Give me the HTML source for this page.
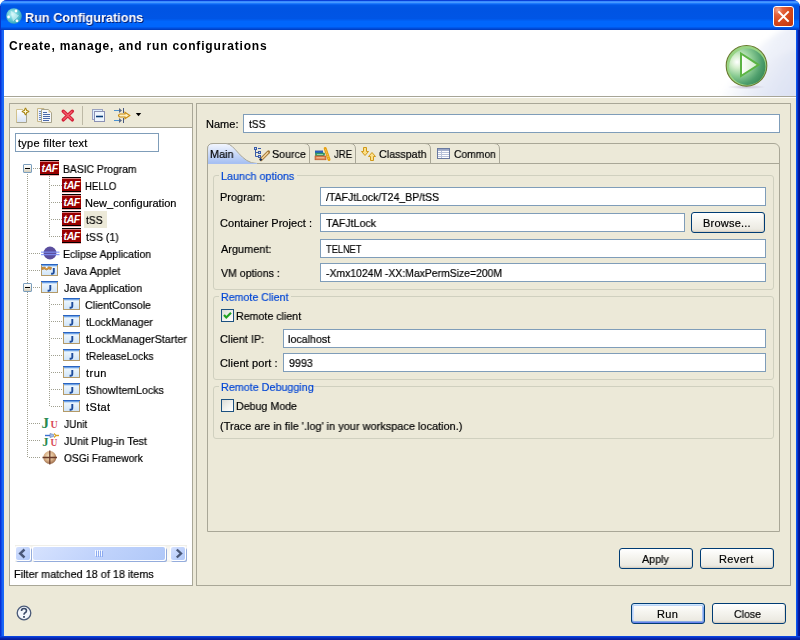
<!DOCTYPE html>
<html><head><meta charset="utf-8"><style>
html,body{margin:0;padding:0;}
body{width:800px;height:640px;position:relative;overflow:hidden;background:#FFFFFF;font-family:"Liberation Sans", sans-serif;font-size:11px;color:#000;}
svg{overflow:visible;}
</style></head><body>
<div style="position:absolute;left:0;top:0;width:800px;height:640px;background:#0A3BD4;border-radius:7px 7px 0 0;"></div>
<div style="position:absolute;left:0;top:0;width:800px;height:30px;border-radius:7px 7px 0 0;background:linear-gradient(to bottom,#0A40D8 0.5px,#3A8CFF 1.5px,#4898FF 2.5px,#1C7AFC 3.5px,#0A62F0 4.5px,#0058E6 5.5px,#0054E3 8.5px,#0055E5 18.5px,#0060F4 20.5px,#0066FC 21.5px,#0066FC 26.5px,#0052E4 28px,#0040C4 29.5px);"></div>
<div style="position:absolute;left:0;top:6px;width:1px;height:24px;background:#0A34C8;"></div>
<div style="position:absolute;left:799px;top:6px;width:1px;height:24px;background:#0A2AA8;"></div>
<div style="position:absolute;left:0;top:30px;width:4px;height:610px;background:linear-gradient(to right,#0828D0 0px,#0838DC 1px,#1860F2 2px,#1A68F8 3px,#1A68F8 4px);"></div>
<div style="position:absolute;left:796px;top:30px;width:4px;height:610px;background:linear-gradient(to right,#0A5AF0 0px,#0850EC 1px,#0A22B0 2px,#001490 3px,#001490 4px);"></div>
<div style="position:absolute;left:0;top:636px;width:800px;height:4px;background:linear-gradient(to bottom,#0A50F0 0px,#0838D0 1px,#0A2CB8 2px,#061EA0 3px,#061EA0 4px);"></div>
<svg style="position:absolute;left:6px;top:8px" width="16" height="16" viewBox="0 0 16 16"><defs><radialGradient id="ti" cx="0.4" cy="0.4" r="0.65"><stop offset="0" stop-color="#D0F8FA"/><stop offset="0.45" stop-color="#70D0DA"/><stop offset="1" stop-color="#2CA0B8"/></radialGradient></defs><circle cx="8" cy="8" r="7.8" fill="url(#ti)"/><path d="M4.5 2.5 L13.5 8 L7 13.5 Z" fill="#E0FAFC" opacity="0.55"/><path d="M8 13 L14 7" stroke="#2A98A8" stroke-width="0.8" stroke-dasharray="1 1" opacity="0.7"/><circle cx="10" cy="3" r="1.4" fill="#fff"/><circle cx="2.6" cy="9" r="1.4" fill="#fff"/><circle cx="11" cy="12.8" r="1.4" fill="#fff"/></svg>
<div style="position:absolute;will-change:transform;left:26.02px;top:11px;line-height:15px;font-size:13px;color:#0A1E6E;font-weight:bold;white-space:nowrap;transform:scaleX(0.9750);transform-origin:0 0;">Run Configurations</div>
<div style="position:absolute;will-change:transform;left:25.02px;top:10px;line-height:15px;font-size:13px;color:#FFFFFF;font-weight:bold;white-space:nowrap;transform:scaleX(0.9750);transform-origin:0 0;">Run Configurations</div>
<div style="position:absolute;left:773px;top:6px;width:19px;height:19px;border:1px solid #fff;border-radius:3px;background:radial-gradient(circle at 20% 15%,#F2A890 0px,#E4623C 5px,#D6481C 12px,#BC300A 24px);"></div>
<svg style="position:absolute;left:773px;top:6px" width="21" height="21" viewBox="0 0 21 21"><path d="M6 6 L15 15 M15 6 L6 15" stroke="#fff" stroke-width="1.9" stroke-linecap="square"/></svg>
<div style="position:absolute;left:4px;top:30px;width:792px;height:606px;background:#ECE9D8;"></div>
<div style="position:absolute;left:4px;top:30px;width:792px;height:66px;background:#FFFFFF;"></div>
<div style="position:absolute;left:690px;top:30px;width:106px;height:66px;overflow:hidden">
<svg width="106" height="66" viewBox="690 30 106 66" style="position:absolute;left:0;top:0;overflow:hidden"><defs><linearGradient id="bn1" gradientUnits="userSpaceOnUse" x1="745" y1="50" x2="796" y2="80"><stop offset="0" stop-color="#EEF1F9" stop-opacity="0"/><stop offset="0.35" stop-color="#EEF1F9" stop-opacity="0.9"/><stop offset="1" stop-color="#E4E8F5"/></linearGradient><linearGradient id="bn2" gradientUnits="userSpaceOnUse" x1="760" y1="70" x2="796" y2="96"><stop offset="0" stop-color="#E0E5F4" stop-opacity="0"/><stop offset="0.5" stop-color="#E0E5F4" stop-opacity="0.8"/><stop offset="1" stop-color="#DCE1F3"/></linearGradient></defs><filter id="bnb" x="-0.2" y="-0.2" width="1.4" height="1.4"><feGaussianBlur stdDeviation="2.5"/></filter><g filter="url(#bnb)"><path d="M790 26 C762 40 738 62 712 100 L800 100 L800 26 Z" fill="url(#bn1)"/><path d="M800 48 C772 56 748 72 730 100 L800 100 Z" fill="url(#bn2)"/></g></svg></div>
<div style="position:absolute;left:4px;top:96px;width:792px;height:1px;background:#A7A597;"></div>
<div style="position:absolute;left:4px;top:97px;width:792px;height:1px;background:#FFFFFF;"></div>
<div style="position:absolute;will-change:transform;left:9.00px;top:39px;line-height:14px;font-size:12px;color:#000;font-weight:bold;white-space:nowrap;letter-spacing:0.838px;">Create, manage, and run configurations</div>
<svg style="position:absolute;left:722px;top:42px" width="50" height="50" viewBox="722 42 50 50"><defs><radialGradient id="rg" gradientUnits="userSpaceOnUse" cx="739" cy="61" fx="737" fy="62" r="29"><stop offset="0" stop-color="#FFFFFF"/><stop offset="0.22" stop-color="#D4EECC"/><stop offset="0.5" stop-color="#8CCC94"/><stop offset="0.8" stop-color="#4E9E6C"/><stop offset="1" stop-color="#3A8A58"/></radialGradient><linearGradient id="tg" x1="0" y1="0" x2="1" y2="0"><stop offset="0" stop-color="#FFFFFF"/><stop offset="1" stop-color="#D0ECC8"/></linearGradient><radialGradient id="sh" cx="0.5" cy="0.5" r="0.5"><stop offset="0" stop-color="#806890" stop-opacity="0.35"/><stop offset="1" stop-color="#806890" stop-opacity="0"/></radialGradient></defs><ellipse cx="746.5" cy="87" rx="19" ry="2.2" fill="url(#sh)"/><circle cx="746.5" cy="65.8" r="20.3" fill="#98D484" stroke="#6A7A30" stroke-width="1.1"/><circle cx="747.3" cy="66.8" r="18.2" fill="url(#rg)"/><path d="M741 53.5 L758.5 64.8 L741 76 Z" fill="url(#tg)" stroke="#5CB444" stroke-width="2" stroke-linejoin="miter"/></svg>
<div style="position:absolute;left:9px;top:103px;width:184px;height:483px;box-sizing:border-box;border:1px solid #A9A797;background:#FFFFFF;"></div>
<div style="position:absolute;left:10px;top:104px;width:182px;height:23px;background:#ECE9D8;"></div>
<div style="position:absolute;left:10px;top:127px;width:182px;height:1px;background:#A9A797;"></div>
<svg style="position:absolute;left:14px;top:106px" width="18" height="18" viewBox="14 106 18 18"><defs><linearGradient id="pg" x1="0" y1="0" x2="0" y2="1"><stop offset="0" stop-color="#FFFFFF"/><stop offset="1" stop-color="#D8E4F6"/></linearGradient></defs><path d="M16.5 109.5 H23 L26.5 113 V122.5 H16.5 Z" fill="url(#pg)"/><path d="M16.5 122.5 V109.5 H23" stroke="#D2C28E" fill="none"/><path d="M26.5 113 V122.5 H16.5" stroke="#A8A48C" fill="none"/><path d="M25.5 107.8 Q26 111 29.2 111.5 Q26 112 25.5 115.2 Q25 112 21.8 111.5 Q25 111 25.5 107.8 Z" fill="#F2D878" stroke="#A88410" stroke-width="1.1"/><path d="M25.5 109.5 V113.5 M23.5 111.5 H27.5" stroke="#FFFBE0" stroke-width="0.9"/></svg>
<svg style="position:absolute;left:36px;top:106px" width="18" height="18" viewBox="36 106 18 18"><path d="M37.5 108.5 H44 V121.5 H37.5 Z" fill="#EEF2FA" stroke="#C8B888"/><path d="M39 111.5 H42 M39 113.5 H42 M39 115.5 H42 M39 117.5 H42 M39 119.5 H42" stroke="#6A88C0"/><path d="M41.5 109.5 H48.5 L51.5 112.5 V122.5 H41.5 Z" fill="#F6F8FC" stroke="#A8A48C"/><path d="M48.5 109.5 V112.5 H51.5 Z" fill="#E0C890"/><path d="M43 112.5 H47 M43 114.5 H50 M43 116.5 H50 M43 118.5 H50 M43 120.5 H49" stroke="#4A68A8"/></svg>
<svg style="position:absolute;left:60px;top:107px" width="16" height="16" viewBox="60 107 16 16"><path d="M63.3 111.3 L72.3 119.8 M72.3 111.3 L63.3 119.8" stroke="#D42038" stroke-width="3.5" stroke-linecap="round"/><path d="M63.8 111.8 L71.8 119.3 M71.8 111.8 L63.8 119.3" stroke="#F25A6A" stroke-width="1.4" stroke-linecap="round"/></svg>
<div style="position:absolute;left:82px;top:106px;width:1px;height:19px;background:#BDB9A6;"></div>
<svg style="position:absolute;left:90px;top:107px" width="17" height="17" viewBox="90 107 17 17"><rect x="92.5" y="109.5" width="10" height="10" fill="#DDEEFC" stroke="#9AA2C0"/><rect x="94.5" y="111.5" width="10" height="10" fill="#EEF6FE" stroke="#8A90B4"/><path d="M96 116.5 H103" stroke="#0A3C78" stroke-width="1.6"/></svg>
<svg style="position:absolute;left:112px;top:106px" width="20" height="18" viewBox="112 106 20 18"><path d="M114 110.5 H120" stroke="#4A90D0"/><path d="M119 108 L122 110.5 L119 113 Z" fill="#5A6A88"/><path d="M123.5 108 V113" stroke="#4A5A80"/><path d="M114 120.5 H120" stroke="#4A90D0"/><path d="M119 118 L122 120.5 L119 123 Z" fill="#5A6A88"/><path d="M123.5 118 V123" stroke="#4A5A80"/><path d="M118.5 115.5 Q119 114 120 114 H125 V112.3 L129.8 115.5 L125 118.7 V117 H120 Q119 117 118.5 115.5 Z" fill="#FFF0C0" stroke="#C88A10" stroke-width="1.1"/></svg>
<svg style="position:absolute;left:134px;top:111px" width="9" height="7" viewBox="134 111 9 7"><path d="M135.8 113 H141.2 L138.5 116.2 Z" fill="#000"/></svg>
<div style="position:absolute;left:15px;top:133px;width:144px;height:19px;box-sizing:border-box;border:1px solid #7F9DB9;background:#fff;"></div>
<div style="position:absolute;will-change:transform;left:18.00px;top:137px;line-height:13px;font-size:11px;color:#000;font-weight:normal;white-space:nowrap;letter-spacing:0.267px;-webkit-text-stroke:0.2px #000;">type filter text</div>
<div style="position:absolute;left:27px;top:174px;width:1px;height:283px;background:repeating-linear-gradient(to bottom,#A0A090 0px,#A0A090 1px,transparent 1px,transparent 2px);"></div>
<div style="position:absolute;left:49px;top:176px;width:1px;height:61px;background:repeating-linear-gradient(to bottom,#A0A090 0px,#A0A090 1px,transparent 1px,transparent 2px);"></div>
<div style="position:absolute;left:49px;top:295px;width:1px;height:112px;background:repeating-linear-gradient(to bottom,#A0A090 0px,#A0A090 1px,transparent 1px,transparent 2px);"></div>
<div style="position:absolute;left:33px;top:168px;width:7px;height:1px;background:repeating-linear-gradient(to right,#A0A090 0px,#A0A090 1px,transparent 1px,transparent 2px);"></div>
<div style="position:absolute;left:51px;top:185px;width:11px;height:1px;background:repeating-linear-gradient(to right,#A0A090 0px,#A0A090 1px,transparent 1px,transparent 2px);"></div>
<div style="position:absolute;left:51px;top:202px;width:11px;height:1px;background:repeating-linear-gradient(to right,#A0A090 0px,#A0A090 1px,transparent 1px,transparent 2px);"></div>
<div style="position:absolute;left:51px;top:219px;width:11px;height:1px;background:repeating-linear-gradient(to right,#A0A090 0px,#A0A090 1px,transparent 1px,transparent 2px);"></div>
<div style="position:absolute;left:51px;top:236px;width:11px;height:1px;background:repeating-linear-gradient(to right,#A0A090 0px,#A0A090 1px,transparent 1px,transparent 2px);"></div>
<div style="position:absolute;left:29px;top:253px;width:11px;height:1px;background:repeating-linear-gradient(to right,#A0A090 0px,#A0A090 1px,transparent 1px,transparent 2px);"></div>
<div style="position:absolute;left:29px;top:270px;width:11px;height:1px;background:repeating-linear-gradient(to right,#A0A090 0px,#A0A090 1px,transparent 1px,transparent 2px);"></div>
<div style="position:absolute;left:33px;top:287px;width:7px;height:1px;background:repeating-linear-gradient(to right,#A0A090 0px,#A0A090 1px,transparent 1px,transparent 2px);"></div>
<div style="position:absolute;left:51px;top:304px;width:11px;height:1px;background:repeating-linear-gradient(to right,#A0A090 0px,#A0A090 1px,transparent 1px,transparent 2px);"></div>
<div style="position:absolute;left:51px;top:321px;width:11px;height:1px;background:repeating-linear-gradient(to right,#A0A090 0px,#A0A090 1px,transparent 1px,transparent 2px);"></div>
<div style="position:absolute;left:51px;top:338px;width:11px;height:1px;background:repeating-linear-gradient(to right,#A0A090 0px,#A0A090 1px,transparent 1px,transparent 2px);"></div>
<div style="position:absolute;left:51px;top:355px;width:11px;height:1px;background:repeating-linear-gradient(to right,#A0A090 0px,#A0A090 1px,transparent 1px,transparent 2px);"></div>
<div style="position:absolute;left:51px;top:372px;width:11px;height:1px;background:repeating-linear-gradient(to right,#A0A090 0px,#A0A090 1px,transparent 1px,transparent 2px);"></div>
<div style="position:absolute;left:51px;top:389px;width:11px;height:1px;background:repeating-linear-gradient(to right,#A0A090 0px,#A0A090 1px,transparent 1px,transparent 2px);"></div>
<div style="position:absolute;left:51px;top:406px;width:11px;height:1px;background:repeating-linear-gradient(to right,#A0A090 0px,#A0A090 1px,transparent 1px,transparent 2px);"></div>
<div style="position:absolute;left:29px;top:423px;width:11px;height:1px;background:repeating-linear-gradient(to right,#A0A090 0px,#A0A090 1px,transparent 1px,transparent 2px);"></div>
<div style="position:absolute;left:29px;top:440px;width:11px;height:1px;background:repeating-linear-gradient(to right,#A0A090 0px,#A0A090 1px,transparent 1px,transparent 2px);"></div>
<div style="position:absolute;left:29px;top:457px;width:11px;height:1px;background:repeating-linear-gradient(to right,#A0A090 0px,#A0A090 1px,transparent 1px,transparent 2px);"></div>
<div style="position:absolute;left:23px;top:164px;width:7px;height:7px;border:1px solid #7B9EBD;border-radius:1px;background:linear-gradient(to bottom,#FFFFFF,#F0EEE4 50%,#D2CBB8);"></div>
<div style="position:absolute;left:25px;top:168px;width:5px;height:1px;background:#000;"></div>
<svg style="position:absolute;left:40px;top:160px" width="19" height="16" viewBox="0 0 19 16"><rect x="0" y="0" width="19" height="1" fill="#000"/><rect x="0" y="1" width="19" height="1" fill="#D88080"/><rect x="0" y="2" width="19" height="12" fill="#990000"/><rect x="0" y="14" width="19" height="1" fill="#000"/><rect x="0" y="15" width="19" height="1" fill="#F0B0B0"/><text x="9.7" y="12" text-anchor="middle" font-family="Liberation Sans" font-style="italic" font-weight="bold" font-size="10.5" fill="#fff" letter-spacing="-0.4">tAF</text></svg>
<div style="position:absolute;will-change:transform;left:62.76px;top:163px;line-height:13px;font-size:11px;color:#000;font-weight:normal;white-space:nowrap;-webkit-text-stroke:0.2px #000;transform:scaleX(0.9403);transform-origin:0 0;">BASIC Program</div>
<svg style="position:absolute;left:62px;top:177px" width="19" height="16" viewBox="0 0 19 16"><rect x="0" y="0" width="19" height="1" fill="#000"/><rect x="0" y="1" width="19" height="1" fill="#D88080"/><rect x="0" y="2" width="19" height="12" fill="#990000"/><rect x="0" y="14" width="19" height="1" fill="#000"/><rect x="0" y="15" width="19" height="1" fill="#F0B0B0"/><text x="9.7" y="12" text-anchor="middle" font-family="Liberation Sans" font-style="italic" font-weight="bold" font-size="10.5" fill="#fff" letter-spacing="-0.4">tAF</text></svg>
<div style="position:absolute;will-change:transform;left:84.83px;top:180px;line-height:13px;font-size:11px;color:#000;font-weight:normal;white-space:nowrap;-webkit-text-stroke:0.2px #000;transform:scaleX(0.8686);transform-origin:0 0;">HELLO</div>
<svg style="position:absolute;left:62px;top:194px" width="19" height="16" viewBox="0 0 19 16"><rect x="0" y="0" width="19" height="1" fill="#000"/><rect x="0" y="1" width="19" height="1" fill="#D88080"/><rect x="0" y="2" width="19" height="12" fill="#990000"/><rect x="0" y="14" width="19" height="1" fill="#000"/><rect x="0" y="15" width="19" height="1" fill="#F0B0B0"/><text x="9.7" y="12" text-anchor="middle" font-family="Liberation Sans" font-style="italic" font-weight="bold" font-size="10.5" fill="#fff" letter-spacing="-0.4">tAF</text></svg>
<div style="position:absolute;will-change:transform;left:84.70px;top:197px;line-height:13px;font-size:11px;color:#000;font-weight:normal;white-space:nowrap;letter-spacing:0.019px;-webkit-text-stroke:0.2px #000;">New_configuration</div>
<div style="position:absolute;left:84px;top:211px;width:23px;height:17px;background:#ECE9D8;"></div>
<svg style="position:absolute;left:62px;top:211px" width="19" height="16" viewBox="0 0 19 16"><rect x="0" y="0" width="19" height="1" fill="#000"/><rect x="0" y="1" width="19" height="1" fill="#D88080"/><rect x="0" y="2" width="19" height="12" fill="#990000"/><rect x="0" y="14" width="19" height="1" fill="#000"/><rect x="0" y="15" width="19" height="1" fill="#F0B0B0"/><text x="9.7" y="12" text-anchor="middle" font-family="Liberation Sans" font-style="italic" font-weight="bold" font-size="10.5" fill="#fff" letter-spacing="-0.4">tAF</text></svg>
<div style="position:absolute;will-change:transform;left:85.70px;top:214px;line-height:13px;font-size:11px;color:#000;font-weight:normal;white-space:nowrap;-webkit-text-stroke:0.2px #000;transform:scaleX(0.9294);transform-origin:0 0;">tSS</div>
<svg style="position:absolute;left:62px;top:228px" width="19" height="16" viewBox="0 0 19 16"><rect x="0" y="0" width="19" height="1" fill="#000"/><rect x="0" y="1" width="19" height="1" fill="#D88080"/><rect x="0" y="2" width="19" height="12" fill="#990000"/><rect x="0" y="14" width="19" height="1" fill="#000"/><rect x="0" y="15" width="19" height="1" fill="#F0B0B0"/><text x="9.7" y="12" text-anchor="middle" font-family="Liberation Sans" font-style="italic" font-weight="bold" font-size="10.5" fill="#fff" letter-spacing="-0.4">tAF</text></svg>
<div style="position:absolute;will-change:transform;left:85.70px;top:231px;line-height:13px;font-size:11px;color:#000;font-weight:normal;white-space:nowrap;-webkit-text-stroke:0.2px #000;transform:scaleX(0.9559);transform-origin:0 0;">tSS (1)</div>
<svg style="position:absolute;left:41px;top:245px" width="19" height="16" viewBox="0 0 19 16"><circle cx="9" cy="8" r="6.4" fill="#5B4E9E"/><rect x="0" y="6.6" width="18.5" height="1.1" fill="#7E90F4"/><rect x="0" y="9.1" width="18.5" height="1.1" fill="#7E90F4"/></svg>
<div style="position:absolute;will-change:transform;left:62.74px;top:248px;line-height:13px;font-size:11px;color:#000;font-weight:normal;white-space:nowrap;-webkit-text-stroke:0.2px #000;transform:scaleX(0.9611);transform-origin:0 0;">Eclipse Application</div>
<svg style="position:absolute;left:41px;top:262px" width="17" height="16" viewBox="0 0 17 16"><defs><linearGradient id="jf2" x1="0" y1="0" x2="0" y2="1"><stop offset="0" stop-color="#F4FAFE"/><stop offset="1" stop-color="#CFE4F8"/></linearGradient></defs><rect x="0.5" y="2.5" width="16" height="11" fill="url(#jf2)" stroke="#B49A68"/><rect x="0" y="2" width="17" height="1" fill="#2A64C0"/><rect x="1" y="3" width="15" height="1.3" fill="#6FA4E8"/><path d="M1 5.5 L4 5 L5.5 6.2 L7.8 4.8 L10.5 5.5 L10 7.5 L7.5 7 L5.5 8 L3.5 7 L1 7.5 Z" fill="#D89A40" stroke="#A86A20" stroke-width="0.6"/><circle cx="5.6" cy="5.3" r="0.9" fill="#fff"/><path d="M12.8 6 V10.2 Q12.8 11.7 11.3 11.7 H10.1" stroke="#1E4C9C" stroke-width="1.9" fill="none"/></svg>
<div style="position:absolute;will-change:transform;left:63.70px;top:265px;line-height:13px;font-size:11px;color:#000;font-weight:normal;white-space:nowrap;-webkit-text-stroke:0.2px #000;transform:scaleX(0.9912);transform-origin:0 0;">Java Applet</div>
<div style="position:absolute;left:23px;top:283px;width:7px;height:7px;border:1px solid #7B9EBD;border-radius:1px;background:linear-gradient(to bottom,#FFFFFF,#F0EEE4 50%,#D2CBB8);"></div>
<div style="position:absolute;left:25px;top:287px;width:5px;height:1px;background:#000;"></div>
<svg style="position:absolute;left:41px;top:279px" width="17" height="16" viewBox="0 0 17 16"><defs><linearGradient id="jf" x1="0" y1="0" x2="0" y2="1"><stop offset="0" stop-color="#F4FAFE"/><stop offset="1" stop-color="#CFE4F8"/></linearGradient></defs><rect x="0.5" y="2.5" width="16" height="11" fill="url(#jf)" stroke="#B49A68"/><rect x="0" y="2" width="17" height="1" fill="#2A64C0"/><rect x="1" y="3" width="15" height="1.3" fill="#6FA4E8"/><path d="M9.3 6 V10.2 Q9.3 11.7 7.8 11.7 H6.6" stroke="#1E4C9C" stroke-width="1.9" fill="none"/></svg>
<div style="position:absolute;will-change:transform;left:63.70px;top:282px;line-height:13px;font-size:11px;color:#000;font-weight:normal;white-space:nowrap;-webkit-text-stroke:0.2px #000;transform:scaleX(0.9823);transform-origin:0 0;">Java Application</div>
<svg style="position:absolute;left:63px;top:296px" width="17" height="16" viewBox="0 0 17 16"><defs><linearGradient id="jf" x1="0" y1="0" x2="0" y2="1"><stop offset="0" stop-color="#F4FAFE"/><stop offset="1" stop-color="#CFE4F8"/></linearGradient></defs><rect x="0.5" y="2.5" width="16" height="11" fill="url(#jf)" stroke="#B49A68"/><rect x="0" y="2" width="17" height="1" fill="#2A64C0"/><rect x="1" y="3" width="15" height="1.3" fill="#6FA4E8"/><path d="M9.3 6 V10.2 Q9.3 11.7 7.8 11.7 H6.6" stroke="#1E4C9C" stroke-width="1.9" fill="none"/></svg>
<div style="position:absolute;will-change:transform;left:84.74px;top:299px;line-height:13px;font-size:11px;color:#000;font-weight:normal;white-space:nowrap;-webkit-text-stroke:0.2px #000;transform:scaleX(0.9627);transform-origin:0 0;">ClientConsole</div>
<svg style="position:absolute;left:63px;top:313px" width="17" height="16" viewBox="0 0 17 16"><defs><linearGradient id="jf" x1="0" y1="0" x2="0" y2="1"><stop offset="0" stop-color="#F4FAFE"/><stop offset="1" stop-color="#CFE4F8"/></linearGradient></defs><rect x="0.5" y="2.5" width="16" height="11" fill="url(#jf)" stroke="#B49A68"/><rect x="0" y="2" width="17" height="1" fill="#2A64C0"/><rect x="1" y="3" width="15" height="1.3" fill="#6FA4E8"/><path d="M9.3 6 V10.2 Q9.3 11.7 7.8 11.7 H6.6" stroke="#1E4C9C" stroke-width="1.9" fill="none"/></svg>
<div style="position:absolute;will-change:transform;left:85.70px;top:316px;line-height:13px;font-size:11px;color:#000;font-weight:normal;white-space:nowrap;-webkit-text-stroke:0.2px #000;transform:scaleX(0.9594);transform-origin:0 0;">tLockManager</div>
<svg style="position:absolute;left:63px;top:330px" width="17" height="16" viewBox="0 0 17 16"><defs><linearGradient id="jf" x1="0" y1="0" x2="0" y2="1"><stop offset="0" stop-color="#F4FAFE"/><stop offset="1" stop-color="#CFE4F8"/></linearGradient></defs><rect x="0.5" y="2.5" width="16" height="11" fill="url(#jf)" stroke="#B49A68"/><rect x="0" y="2" width="17" height="1" fill="#2A64C0"/><rect x="1" y="3" width="15" height="1.3" fill="#6FA4E8"/><path d="M9.3 6 V10.2 Q9.3 11.7 7.8 11.7 H6.6" stroke="#1E4C9C" stroke-width="1.9" fill="none"/></svg>
<div style="position:absolute;will-change:transform;left:85.70px;top:333px;line-height:13px;font-size:11px;color:#000;font-weight:normal;white-space:nowrap;-webkit-text-stroke:0.2px #000;transform:scaleX(0.9833);transform-origin:0 0;">tLockManagerStarter</div>
<svg style="position:absolute;left:63px;top:347px" width="17" height="16" viewBox="0 0 17 16"><defs><linearGradient id="jf" x1="0" y1="0" x2="0" y2="1"><stop offset="0" stop-color="#F4FAFE"/><stop offset="1" stop-color="#CFE4F8"/></linearGradient></defs><rect x="0.5" y="2.5" width="16" height="11" fill="url(#jf)" stroke="#B49A68"/><rect x="0" y="2" width="17" height="1" fill="#2A64C0"/><rect x="1" y="3" width="15" height="1.3" fill="#6FA4E8"/><path d="M9.3 6 V10.2 Q9.3 11.7 7.8 11.7 H6.6" stroke="#1E4C9C" stroke-width="1.9" fill="none"/></svg>
<div style="position:absolute;will-change:transform;left:85.70px;top:350px;line-height:13px;font-size:11px;color:#000;font-weight:normal;white-space:nowrap;-webkit-text-stroke:0.2px #000;transform:scaleX(0.9347);transform-origin:0 0;">tReleaseLocks</div>
<svg style="position:absolute;left:63px;top:364px" width="17" height="16" viewBox="0 0 17 16"><defs><linearGradient id="jf" x1="0" y1="0" x2="0" y2="1"><stop offset="0" stop-color="#F4FAFE"/><stop offset="1" stop-color="#CFE4F8"/></linearGradient></defs><rect x="0.5" y="2.5" width="16" height="11" fill="url(#jf)" stroke="#B49A68"/><rect x="0" y="2" width="17" height="1" fill="#2A64C0"/><rect x="1" y="3" width="15" height="1.3" fill="#6FA4E8"/><path d="M9.3 6 V10.2 Q9.3 11.7 7.8 11.7 H6.6" stroke="#1E4C9C" stroke-width="1.9" fill="none"/></svg>
<div style="position:absolute;will-change:transform;left:85.70px;top:367px;line-height:13px;font-size:11px;color:#000;font-weight:normal;white-space:nowrap;letter-spacing:0.467px;-webkit-text-stroke:0.2px #000;">trun</div>
<svg style="position:absolute;left:63px;top:381px" width="17" height="16" viewBox="0 0 17 16"><defs><linearGradient id="jf" x1="0" y1="0" x2="0" y2="1"><stop offset="0" stop-color="#F4FAFE"/><stop offset="1" stop-color="#CFE4F8"/></linearGradient></defs><rect x="0.5" y="2.5" width="16" height="11" fill="url(#jf)" stroke="#B49A68"/><rect x="0" y="2" width="17" height="1" fill="#2A64C0"/><rect x="1" y="3" width="15" height="1.3" fill="#6FA4E8"/><path d="M9.3 6 V10.2 Q9.3 11.7 7.8 11.7 H6.6" stroke="#1E4C9C" stroke-width="1.9" fill="none"/></svg>
<div style="position:absolute;will-change:transform;left:85.70px;top:384px;line-height:13px;font-size:11px;color:#000;font-weight:normal;white-space:nowrap;-webkit-text-stroke:0.2px #000;transform:scaleX(0.9638);transform-origin:0 0;">tShowItemLocks</div>
<svg style="position:absolute;left:63px;top:398px" width="17" height="16" viewBox="0 0 17 16"><defs><linearGradient id="jf" x1="0" y1="0" x2="0" y2="1"><stop offset="0" stop-color="#F4FAFE"/><stop offset="1" stop-color="#CFE4F8"/></linearGradient></defs><rect x="0.5" y="2.5" width="16" height="11" fill="url(#jf)" stroke="#B49A68"/><rect x="0" y="2" width="17" height="1" fill="#2A64C0"/><rect x="1" y="3" width="15" height="1.3" fill="#6FA4E8"/><path d="M9.3 6 V10.2 Q9.3 11.7 7.8 11.7 H6.6" stroke="#1E4C9C" stroke-width="1.9" fill="none"/></svg>
<div style="position:absolute;will-change:transform;left:85.70px;top:401px;line-height:13px;font-size:11px;color:#000;font-weight:normal;white-space:nowrap;letter-spacing:0.375px;-webkit-text-stroke:0.2px #000;">tStat</div>
<svg style="position:absolute;left:40px;top:415px" width="20" height="20" viewBox="40 415 20 20"><text x="41.5" y="427.60" font-family="Liberation Serif" font-weight="bold" font-size="15" fill="#2A8A50">J</text><text x="50.6" y="427.60" font-family="Liberation Serif" font-weight="bold" font-size="10" fill="#D84A58">U</text></svg>
<div style="position:absolute;will-change:transform;left:63.70px;top:418px;line-height:13px;font-size:11px;color:#000;font-weight:normal;white-space:nowrap;-webkit-text-stroke:0.2px #000;transform:scaleX(0.9280);transform-origin:0 0;">JUnit</div>
<svg style="position:absolute;left:40px;top:432px" width="20" height="20" viewBox="40 432 20 20"><path d="M45 435.5 H50.5" stroke="#3A70D0" stroke-width="1.4"/><path d="M50 433.5 L53.5 434.5 V436.5 L50 437.5 Z" fill="#A8C0E8" stroke="#5A7AB8" stroke-width="0.6"/><path d="M54 433.5 L56 435.5 L54 437.5" stroke="#D8A020" stroke-width="1.1" fill="none"/><path d="M56 435.5 H59" stroke="#D8A020" stroke-width="1.4"/><text x="42.3" y="445.80" font-family="Liberation Serif" font-weight="bold" font-size="12.5" fill="#2A8A50">J</text><text x="50.6" y="445.80" font-family="Liberation Serif" font-weight="bold" font-size="9.5" fill="#D84A58">U</text></svg>
<div style="position:absolute;will-change:transform;left:63.70px;top:435px;line-height:13px;font-size:11px;color:#000;font-weight:normal;white-space:nowrap;-webkit-text-stroke:0.2px #000;transform:scaleX(0.9706);transform-origin:0 0;">JUnit Plug-in Test</div>
<svg style="position:absolute;left:41px;top:449px" width="18" height="17" viewBox="0 0 18 17"><defs><radialGradient id="og" cx="0.45" cy="0.4" r="0.6"><stop offset="0" stop-color="#F8E8C8"/><stop offset="0.6" stop-color="#D8B088"/><stop offset="1" stop-color="#9A6A48"/></radialGradient></defs><circle cx="8.8" cy="8.5" r="6.5" fill="url(#og)"/><path d="M8.8 1.5 V15.5 M1.5 8.5 H16" stroke="#6A3A28" stroke-width="1.3"/></svg>
<div style="position:absolute;will-change:transform;left:63.70px;top:452px;line-height:13px;font-size:11px;color:#000;font-weight:normal;white-space:nowrap;-webkit-text-stroke:0.2px #000;transform:scaleX(0.9271);transform-origin:0 0;">OSGi Framework</div>
<div style="position:absolute;left:15px;top:545px;width:172px;height:17px;background:linear-gradient(to bottom,#EEEDE5 0px,#F6F5F0 2px,#FCFCFA 14px,#F0EFE8 17px);"></div>
<div style="position:absolute;left:16px;top:548px;width:16px;height:14px;border-radius:2px;background:#94ACDC;"></div>
<div style="position:absolute;left:15px;top:546px;width:16px;height:15px;border-radius:2px;background:#FFFFFF;"></div>
<div style="position:absolute;left:16px;top:547px;width:14px;height:13px;border-radius:2px;background:linear-gradient(135deg,#D6E2FE 0%,#C2D4FC 45%,#B0C8F8 100%);"></div>
<div style="position:absolute;left:33px;top:548px;width:134px;height:14px;border-radius:2px;background:#94ACDC;"></div>
<div style="position:absolute;left:32px;top:546px;width:134px;height:15px;border-radius:2px;background:#FFFFFF;"></div>
<div style="position:absolute;left:33px;top:547px;width:132px;height:13px;border-radius:2px;background:linear-gradient(135deg,#D6E2FE 0%,#C2D4FC 45%,#B0C8F8 100%);"></div>
<div style="position:absolute;left:171px;top:548px;width:16px;height:14px;border-radius:2px;background:#94ACDC;"></div>
<div style="position:absolute;left:170px;top:546px;width:16px;height:15px;border-radius:2px;background:#FFFFFF;"></div>
<div style="position:absolute;left:171px;top:547px;width:14px;height:13px;border-radius:2px;background:linear-gradient(135deg,#D6E2FE 0%,#C2D4FC 45%,#B0C8F8 100%);"></div>
<svg style="position:absolute;left:15px;top:545px" width="16" height="17" viewBox="15 545 16 17"><path d="M24.5 549.5 L20.2 553.5 L24.5 557.5" stroke="#4A5878" stroke-width="2.4" fill="none"/></svg>
<svg style="position:absolute;left:170px;top:545px" width="17" height="17" viewBox="170 545 17 17"><path d="M176.8 549.5 L181 553.5 L176.8 557.5" stroke="#4A5878" stroke-width="2.4" fill="none"/></svg>
<svg style="position:absolute;left:94px;top:549px" width="10" height="9" viewBox="94 549 10 9"><path d="M95.5 550 V556 M97.5 550 V556 M99.5 550 V556 M101.5 550 V556" stroke="#F4F8FF"/><path d="M96.5 551 V557 M98.5 551 V557 M100.5 551 V557 M102.5 551 V557" stroke="#8CAAF0"/></svg>
<div style="position:absolute;will-change:transform;left:14.01px;top:568px;line-height:13px;font-size:11px;color:#000;font-weight:normal;white-space:nowrap;-webkit-text-stroke:0.2px #000;transform:scaleX(0.9857);transform-origin:0 0;">Filter matched 18 of 18 items</div>
<div style="position:absolute;left:196px;top:103px;width:595px;height:483px;box-sizing:border-box;border:1px solid #A9A797;"></div>
<div style="position:absolute;will-change:transform;left:205.50px;top:118px;line-height:13px;font-size:11px;color:#000;font-weight:normal;white-space:nowrap;letter-spacing:0.025px;-webkit-text-stroke:0.2px #000;">Name:</div>
<div style="position:absolute;left:243px;top:114px;width:537px;height:19px;box-sizing:border-box;border:1px solid #7F9DB9;background:#fff;"></div>
<div style="position:absolute;will-change:transform;left:248.50px;top:118px;line-height:13px;font-size:11px;color:#000;font-weight:normal;white-space:nowrap;-webkit-text-stroke:0.2px #000;transform:scaleX(0.9235);transform-origin:0 0;">tSS</div>
<div style="position:absolute;left:207px;top:143px;width:573px;height:389px;box-sizing:border-box;border:1px solid #A9A797;border-radius:6px 6px 0 0;"></div>
<div style="position:absolute;left:208px;top:163px;width:571px;height:1px;background:#A9A797;"></div>
<svg style="position:absolute;left:207px;top:143px" width="60" height="22" viewBox="0 0 60 22"><defs><linearGradient id="mt" x1="0" y1="0" x2="0" y2="1"><stop offset="0" stop-color="#F4F7FE"/><stop offset="1" stop-color="#A2BDF2"/></linearGradient></defs><path d="M0.5 21 V6 Q0.5 0.5 6 0.5 H19 C28 0.5 34 20.5 50 20.5 H60 V21 Z" fill="url(#mt)"/><path d="M0.5 22 V6 Q0.5 0.5 6 0.5 H19 C28 0.5 34 20.5 50 20.5 H60" stroke="#A9A797" fill="none"/></svg>
<div style="position:absolute;left:208px;top:163px;width:49px;height:1px;background:#A8C0F2;"></div>
<div style="position:absolute;will-change:transform;left:209.62px;top:148px;line-height:13px;font-size:11px;color:#000;font-weight:normal;white-space:nowrap;-webkit-text-stroke:0.2px #000;transform:scaleX(0.9818);transform-origin:0 0;">Main</div>
<svg style="position:absolute;left:304px;top:143px" width="7" height="21" viewBox="0 0 7 21"><path d="M0 0.5 Q5.5 0.5 5.5 6 V20" stroke="#A9A797" fill="none"/></svg>
<svg style="position:absolute;left:350px;top:143px" width="7" height="21" viewBox="0 0 7 21"><path d="M0 0.5 Q5.5 0.5 5.5 6 V20" stroke="#A9A797" fill="none"/></svg>
<svg style="position:absolute;left:425px;top:143px" width="7" height="21" viewBox="0 0 7 21"><path d="M0 0.5 Q5.5 0.5 5.5 6 V20" stroke="#A9A797" fill="none"/></svg>
<svg style="position:absolute;left:494px;top:143px" width="7" height="21" viewBox="0 0 7 21"><path d="M0 0.5 Q5.5 0.5 5.5 6 V20" stroke="#A9A797" fill="none"/></svg>
<svg style="position:absolute;left:252px;top:145px" width="20" height="19" viewBox="252 145 20 19"><rect x="254" y="147" width="3" height="3" fill="#3A5CA8"/><rect x="255" y="148" width="1" height="1" fill="#C8D4F0"/><rect x="258" y="148" width="3" height="1" fill="#3A5CA8"/><path d="M255.5 150 V156.5 H258 M255.5 152.5 H258" stroke="#3A5CA8" fill="none"/><rect x="258" y="151" width="3" height="3" fill="#3A5CA8"/><rect x="259" y="152" width="1" height="1" fill="#C8D4F0"/><rect x="258" y="155" width="3" height="3" fill="#3A5CA8"/><rect x="259" y="156" width="1" height="1" fill="#C8D4F0"/><path d="M261 159.5 L268.5 152" stroke="#A07838" stroke-width="3.2" stroke-linecap="round"/><path d="M261.3 159.2 L268.2 152.3" stroke="#F8D8A0" stroke-width="1.4"/><path d="M260 160.2 L261.5 158.7" stroke="#0A2A60" stroke-width="2.2"/></svg>
<div style="position:absolute;will-change:transform;left:271.83px;top:148px;line-height:13px;font-size:11px;color:#000;font-weight:normal;white-space:nowrap;-webkit-text-stroke:0.2px #000;transform:scaleX(0.9727);transform-origin:0 0;">Source</div>
<svg style="position:absolute;left:313px;top:146px" width="18" height="16" viewBox="313 146 18 16"><rect x="315" y="151" width="8" height="2" fill="#2A68C8"/><rect x="315" y="150.6" width="8" height="0.6" fill="#1A3A90"/><rect x="315.5" y="153" width="9" height="2.6" fill="#3AA070" stroke="#1A7040" stroke-width="0.5"/><rect x="317" y="154" width="6" height="0.8" fill="#A8E0B8"/><rect x="315" y="156" width="11" height="3.8" fill="#E08050" stroke="#B05020" stroke-width="0.6"/><rect x="316.5" y="157.3" width="8" height="1" fill="#F8C8A0"/><path d="M325.2 148.5 L329 159.5" stroke="#E8A010" stroke-width="3" stroke-linecap="round"/><path d="M325.6 149.5 L328.6 158.5" stroke="#FCE090" stroke-width="1" stroke-dasharray="1 1.2"/></svg>
<div style="position:absolute;will-change:transform;left:333.80px;top:148px;line-height:13px;font-size:11px;color:#000;font-weight:normal;white-space:nowrap;-webkit-text-stroke:0.2px #000;transform:scaleX(0.8700);transform-origin:0 0;">JRE</div>
<svg style="position:absolute;left:359px;top:145px" width="19" height="17" viewBox="359 145 19 17"><path d="M363.5 147.5 H366.5 V151.5 H368.5 L365 155.5 L361.5 151.5 H363.5 Z" fill="#FCE088" stroke="#D09818"/><path d="M370.5 160.5 H373.5 V156.5 H375.5 L372 152.5 L368.5 156.5 H370.5 Z" fill="#FCE088" stroke="#D09818"/></svg>
<div style="position:absolute;will-change:transform;left:378.83px;top:148px;line-height:13px;font-size:11px;color:#000;font-weight:normal;white-space:nowrap;-webkit-text-stroke:0.2px #000;transform:scaleX(0.9723);transform-origin:0 0;">Classpath</div>
<svg style="position:absolute;left:436px;top:147px" width="15" height="13" viewBox="436 147 15 13"><rect x="437.5" y="148.5" width="12" height="10" fill="#B8C2DA" stroke="#6A7AA0"/><rect x="438" y="149" width="11" height="1.6" fill="#9AA6C6"/><rect x="438" y="151" width="3" height="1" fill="#fff"/><rect x="442" y="151" width="7" height="1" fill="#fff"/><rect x="438" y="153" width="3" height="1" fill="#fff"/><rect x="442" y="153" width="7" height="1" fill="#fff"/><rect x="438" y="155" width="3" height="1" fill="#fff"/><rect x="442" y="155" width="7" height="1" fill="#fff"/><rect x="438" y="157" width="3" height="1" fill="#fff"/><rect x="442" y="157" width="7" height="1" fill="#fff"/></svg>
<div style="position:absolute;will-change:transform;left:453.76px;top:148px;line-height:13px;font-size:11px;color:#000;font-weight:normal;white-space:nowrap;-webkit-text-stroke:0.2px #000;transform:scaleX(0.9372);transform-origin:0 0;">Common</div>
<div style="position:absolute;left:213px;top:175px;width:561px;height:115px;box-sizing:border-box;border:1px solid #D0D0BF;border-radius:3px;"></div>
<div style="position:absolute;left:219px;top:170px;width:78px;height:12px;background:#ECE9D8;"></div>
<div style="position:absolute;will-change:transform;left:220.62px;top:170px;line-height:13px;font-size:11px;color:#0046D5;font-weight:normal;white-space:nowrap;-webkit-text-stroke:0.2px #0046D5;transform:scaleX(0.9822);transform-origin:0 0;">Launch options</div>
<div style="position:absolute;will-change:transform;left:219.70px;top:191px;line-height:13px;font-size:11px;color:#000;font-weight:normal;white-space:nowrap;-webkit-text-stroke:0.2px #000;transform:scaleX(0.9953);transform-origin:0 0;">Program:</div>
<div style="position:absolute;left:320px;top:187px;width:446px;height:19px;box-sizing:border-box;border:1px solid #7F9DB9;background:#fff;"></div>
<div style="position:absolute;will-change:transform;left:325.70px;top:191px;line-height:13px;font-size:11px;color:#000;font-weight:normal;white-space:nowrap;-webkit-text-stroke:0.2px #000;transform:scaleX(0.9551);transform-origin:0 0;">/TAFJtLock/T24_BP/tSS</div>
<div style="position:absolute;will-change:transform;left:219.70px;top:217px;line-height:13px;font-size:11px;color:#000;font-weight:normal;white-space:nowrap;letter-spacing:0.050px;-webkit-text-stroke:0.2px #000;">Container Project :</div>
<div style="position:absolute;left:320px;top:213px;width:365px;height:19px;box-sizing:border-box;border:1px solid #7F9DB9;background:#fff;"></div>
<div style="position:absolute;will-change:transform;left:325.70px;top:217px;line-height:13px;font-size:11px;color:#000;font-weight:normal;white-space:nowrap;-webkit-text-stroke:0.2px #000;transform:scaleX(0.9667);transform-origin:0 0;">TAFJtLock</div>
<div style="position:absolute;left:691px;top:212px;width:74px;height:21px;box-sizing:border-box;border:1px solid #003C74;border-radius:3px;background:linear-gradient(to bottom,#FFFFFF 0%,#F6F5F0 40%,#ECEAE2 85%,#DCD7CA 100%);box-shadow:inset 0 -1px 0 #D6D0C5, inset -1px 0 0 #E2DED4;"></div>
<div style="position:absolute;will-change:transform;left:702.70px;top:217px;line-height:13px;font-size:11px;color:#000;font-weight:normal;white-space:nowrap;letter-spacing:0.225px;-webkit-text-stroke:0.2px #000;">Browse...</div>
<div style="position:absolute;will-change:transform;left:220.70px;top:243px;line-height:13px;font-size:11px;color:#000;font-weight:normal;white-space:nowrap;-webkit-text-stroke:0.2px #000;transform:scaleX(0.9920);transform-origin:0 0;">Argument:</div>
<div style="position:absolute;left:320px;top:239px;width:446px;height:19px;box-sizing:border-box;border:1px solid #7F9DB9;background:#fff;"></div>
<div style="position:absolute;will-change:transform;left:325.70px;top:243px;line-height:13px;font-size:11px;color:#000;font-weight:normal;white-space:nowrap;-webkit-text-stroke:0.2px #000;transform:scaleX(0.8405);transform-origin:0 0;">TELNET</div>
<div style="position:absolute;will-change:transform;left:220.70px;top:267px;line-height:13px;font-size:11px;color:#000;font-weight:normal;white-space:nowrap;-webkit-text-stroke:0.2px #000;transform:scaleX(0.9617);transform-origin:0 0;">VM options :</div>
<div style="position:absolute;left:320px;top:263px;width:446px;height:19px;box-sizing:border-box;border:1px solid #7F9DB9;background:#fff;"></div>
<div style="position:absolute;will-change:transform;left:326.00px;top:267px;line-height:13px;font-size:11px;color:#000;font-weight:normal;white-space:nowrap;-webkit-text-stroke:0.2px #000;transform:scaleX(0.9459);transform-origin:0 0;">-Xmx1024M -XX:MaxPermSize=200M</div>
<div style="position:absolute;left:213px;top:296px;width:561px;height:84px;box-sizing:border-box;border:1px solid #D0D0BF;border-radius:3px;"></div>
<div style="position:absolute;left:219px;top:291px;width:72px;height:12px;background:#ECE9D8;"></div>
<div style="position:absolute;will-change:transform;left:220.63px;top:291px;line-height:13px;font-size:11px;color:#0046D5;font-weight:normal;white-space:nowrap;-webkit-text-stroke:0.2px #0046D5;transform:scaleX(0.9667);transform-origin:0 0;">Remote Client</div>
<div style="position:absolute;left:221px;top:309px;width:13px;height:13px;box-sizing:border-box;border:1px solid #1C5180;background:linear-gradient(135deg,#DCDCD7 0%,#F4F4F0 60%,#FFFFFF 100%);"></div>
<svg style="position:absolute;left:221px;top:309px" width="13" height="13" viewBox="0 0 13 13"><path d="M3 6 L5.3 8.5 L10 3.8" stroke="#21A121" stroke-width="2.2" fill="none"/></svg>
<div style="position:absolute;will-change:transform;left:235.93px;top:310px;line-height:13px;font-size:11px;color:#000;font-weight:normal;white-space:nowrap;-webkit-text-stroke:0.2px #000;transform:scaleX(0.9682);transform-origin:0 0;">Remote client</div>
<div style="position:absolute;will-change:transform;left:220.11px;top:333px;line-height:13px;font-size:11px;color:#000;font-weight:normal;white-space:nowrap;-webkit-text-stroke:0.2px #000;transform:scaleX(0.9884);transform-origin:0 0;">Client IP:</div>
<div style="position:absolute;left:283px;top:329px;width:483px;height:19px;box-sizing:border-box;border:1px solid #7F9DB9;background:#fff;"></div>
<div style="position:absolute;will-change:transform;left:288.03px;top:333px;line-height:13px;font-size:11px;color:#000;font-weight:normal;white-space:nowrap;-webkit-text-stroke:0.2px #000;transform:scaleX(0.9738);transform-origin:0 0;">localhost</div>
<div style="position:absolute;will-change:transform;left:220.00px;top:357px;line-height:13px;font-size:11px;color:#000;font-weight:normal;white-space:nowrap;letter-spacing:0.108px;-webkit-text-stroke:0.2px #000;">Client port :</div>
<div style="position:absolute;left:283px;top:353px;width:483px;height:19px;box-sizing:border-box;border:1px solid #7F9DB9;background:#fff;"></div>
<div style="position:absolute;will-change:transform;left:289.00px;top:357px;line-height:13px;font-size:11px;color:#000;font-weight:normal;white-space:nowrap;-webkit-text-stroke:0.2px #000;transform:scaleX(0.9750);transform-origin:0 0;">9993</div>
<div style="position:absolute;left:213px;top:386px;width:561px;height:53px;box-sizing:border-box;border:1px solid #D0D0BF;border-radius:3px;"></div>
<div style="position:absolute;left:219px;top:381px;width:92px;height:12px;background:#ECE9D8;"></div>
<div style="position:absolute;will-change:transform;left:220.62px;top:381px;line-height:13px;font-size:11px;color:#0046D5;font-weight:normal;white-space:nowrap;-webkit-text-stroke:0.2px #0046D5;transform:scaleX(0.9785);transform-origin:0 0;">Remote Debugging</div>
<div style="position:absolute;left:221px;top:399px;width:13px;height:13px;box-sizing:border-box;border:1px solid #1C5180;background:linear-gradient(135deg,#DCDCD7 0%,#F4F4F0 60%,#FFFFFF 100%);"></div>
<div style="position:absolute;will-change:transform;left:235.93px;top:400px;line-height:13px;font-size:11px;color:#000;font-weight:normal;white-space:nowrap;-webkit-text-stroke:0.2px #000;transform:scaleX(0.9689);transform-origin:0 0;">Debug Mode</div>
<div style="position:absolute;will-change:transform;left:220.00px;top:420px;line-height:13px;font-size:11px;color:#000;font-weight:normal;white-space:nowrap;-webkit-text-stroke:0.2px #000;transform:scaleX(0.9959);transform-origin:0 0;">(Trace are in file '.log' in your workspace location.)</div>
<div style="position:absolute;left:619px;top:548px;width:74px;height:21px;box-sizing:border-box;border:1px solid #003C74;border-radius:3px;background:linear-gradient(to bottom,#FFFFFF 0%,#F6F5F0 40%,#ECEAE2 85%,#DCD7CA 100%);box-shadow:inset 0 -1px 0 #D6D0C5, inset -1px 0 0 #E2DED4;"></div>
<div style="position:absolute;will-change:transform;left:641.70px;top:553px;line-height:13px;font-size:11px;color:#000;font-weight:normal;white-space:nowrap;-webkit-text-stroke:0.2px #000;transform:scaleX(0.9741);transform-origin:0 0;">Apply</div>
<div style="position:absolute;left:700px;top:548px;width:74px;height:21px;box-sizing:border-box;border:1px solid #003C74;border-radius:3px;background:linear-gradient(to bottom,#FFFFFF 0%,#F6F5F0 40%,#ECEAE2 85%,#DCD7CA 100%);box-shadow:inset 0 -1px 0 #D6D0C5, inset -1px 0 0 #E2DED4;"></div>
<div style="position:absolute;will-change:transform;left:718.60px;top:553px;line-height:13px;font-size:11px;color:#000;font-weight:normal;white-space:nowrap;letter-spacing:0.360px;-webkit-text-stroke:0.2px #000;">Revert</div>
<svg style="position:absolute;left:16px;top:605px" width="16" height="16" viewBox="0 0 16 16"><circle cx="8" cy="8" r="6.8" fill="#F2F6FC" stroke="#4A5A78" stroke-width="1.3"/><path d="M5.5 6 Q5.5 3.5 8 3.5 Q10.5 3.5 10.5 5.8 Q10.5 7.2 8.8 8 Q8 8.4 8 9.8" stroke="#3A4A68" stroke-width="1.6" fill="none"/><rect x="7.1" y="11" width="1.8" height="1.8" fill="#3A4A68"/></svg>
<div style="position:absolute;left:631px;top:603px;width:74px;height:21px;box-sizing:border-box;border:1px solid #003C74;border-radius:3px;background:linear-gradient(to bottom,#FFFFFF 0%,#F6F5F0 40%,#ECEAE2 85%,#DCD7CA 100%);box-shadow:inset 0 1px 0 #CEE7FF, inset 0 2px 0 #BCD4F6, inset 0 -1px 0 #6982EE, inset 0 -2px 0 #89ADE4, inset 1px 0 0 #B9D1F6, inset 2px 0 0 #D0E0FC, inset -1px 0 0 #7BA0EC, inset -2px 0 0 #A8C4F4;"></div>
<div style="position:absolute;will-change:transform;left:656.70px;top:608px;line-height:13px;font-size:11px;color:#000;font-weight:normal;white-space:nowrap;letter-spacing:0.300px;-webkit-text-stroke:0.2px #000;">Run</div>
<div style="position:absolute;left:712px;top:603px;width:74px;height:21px;box-sizing:border-box;border:1px solid #003C74;border-radius:3px;background:linear-gradient(to bottom,#FFFFFF 0%,#F6F5F0 40%,#ECEAE2 85%,#DCD7CA 100%);box-shadow:inset 0 -1px 0 #D6D0C5, inset -1px 0 0 #E2DED4;"></div>
<div style="position:absolute;will-change:transform;left:734.34px;top:608px;line-height:13px;font-size:11px;color:#000;font-weight:normal;white-space:nowrap;-webkit-text-stroke:0.2px #000;transform:scaleX(0.9593);transform-origin:0 0;">Close</div>
</body></html>
